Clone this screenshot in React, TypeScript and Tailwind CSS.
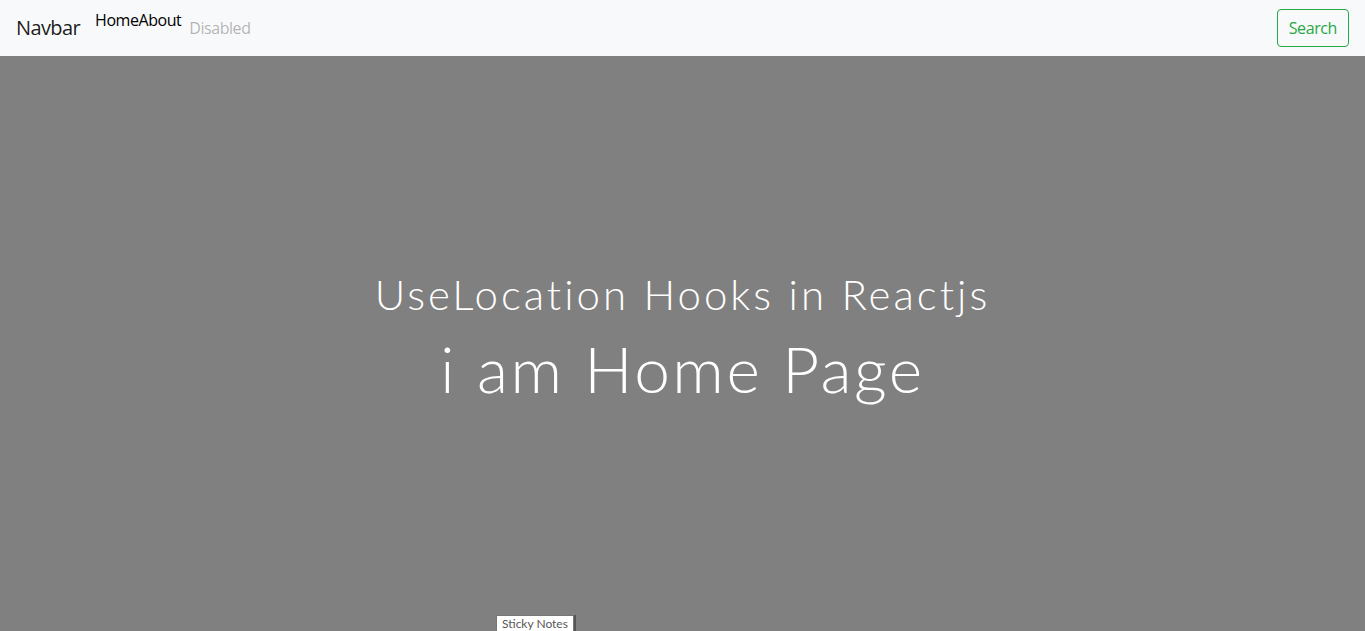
import React from 'react';

const App: React.FC = () => {
  return (
    <div className="relative min-h-[631px] bg-[#808080] font-['Lato','Open_Sans',sans-serif]">
      {/* NAVBAR */}
      <nav className="flex h-14 items-stretch justify-between bg-[#f8f9fa] px-4 font-['Open_Sans','Noto_Sans',sans-serif]">
        <div className="flex items-center">
          <a className="mr-[15px] text-xl tracking-[-0.6px] text-black/90">Navbar</a>
          <div className="flex self-start pt-[8px] tracking-[-0.45px]">
            <a className="text-base text-black">Home</a>
            <a className="text-base text-black">About</a>
          </div>
          <span className="ml-2 text-base tracking-[-0.45px] text-black/30">Disabled</span>
        </div>
        <div className="flex items-center">
          <button className="h-[38px] rounded border border-[#28a745] px-[11px] text-base tracking-[-0.4px] text-[#28a745]">
            Search
          </button>
        </div>
      </nav>

      {/* CONTENU */}
      <main className="flex flex-col items-center pt-[213px] font-light text-white">
        <h1 className="text-[42px] leading-[1.2] tracking-[3px]">UseLocation Hooks in Reactjs</h1>
        <h2 className="mt-[12px] text-[64px] leading-[1.2] tracking-[2.5px]">i am Home Page</h2>
      </main>

      {/* TOOLTIP */}
      <div className="absolute left-[496px] top-[615px] border border-[#767676] bg-white px-[5px] text-xs leading-[15px] text-[#575757] shadow-[2px_0_0_#555]">
        Sticky Notes
      </div>
    </div>
  );
};

export default App;
